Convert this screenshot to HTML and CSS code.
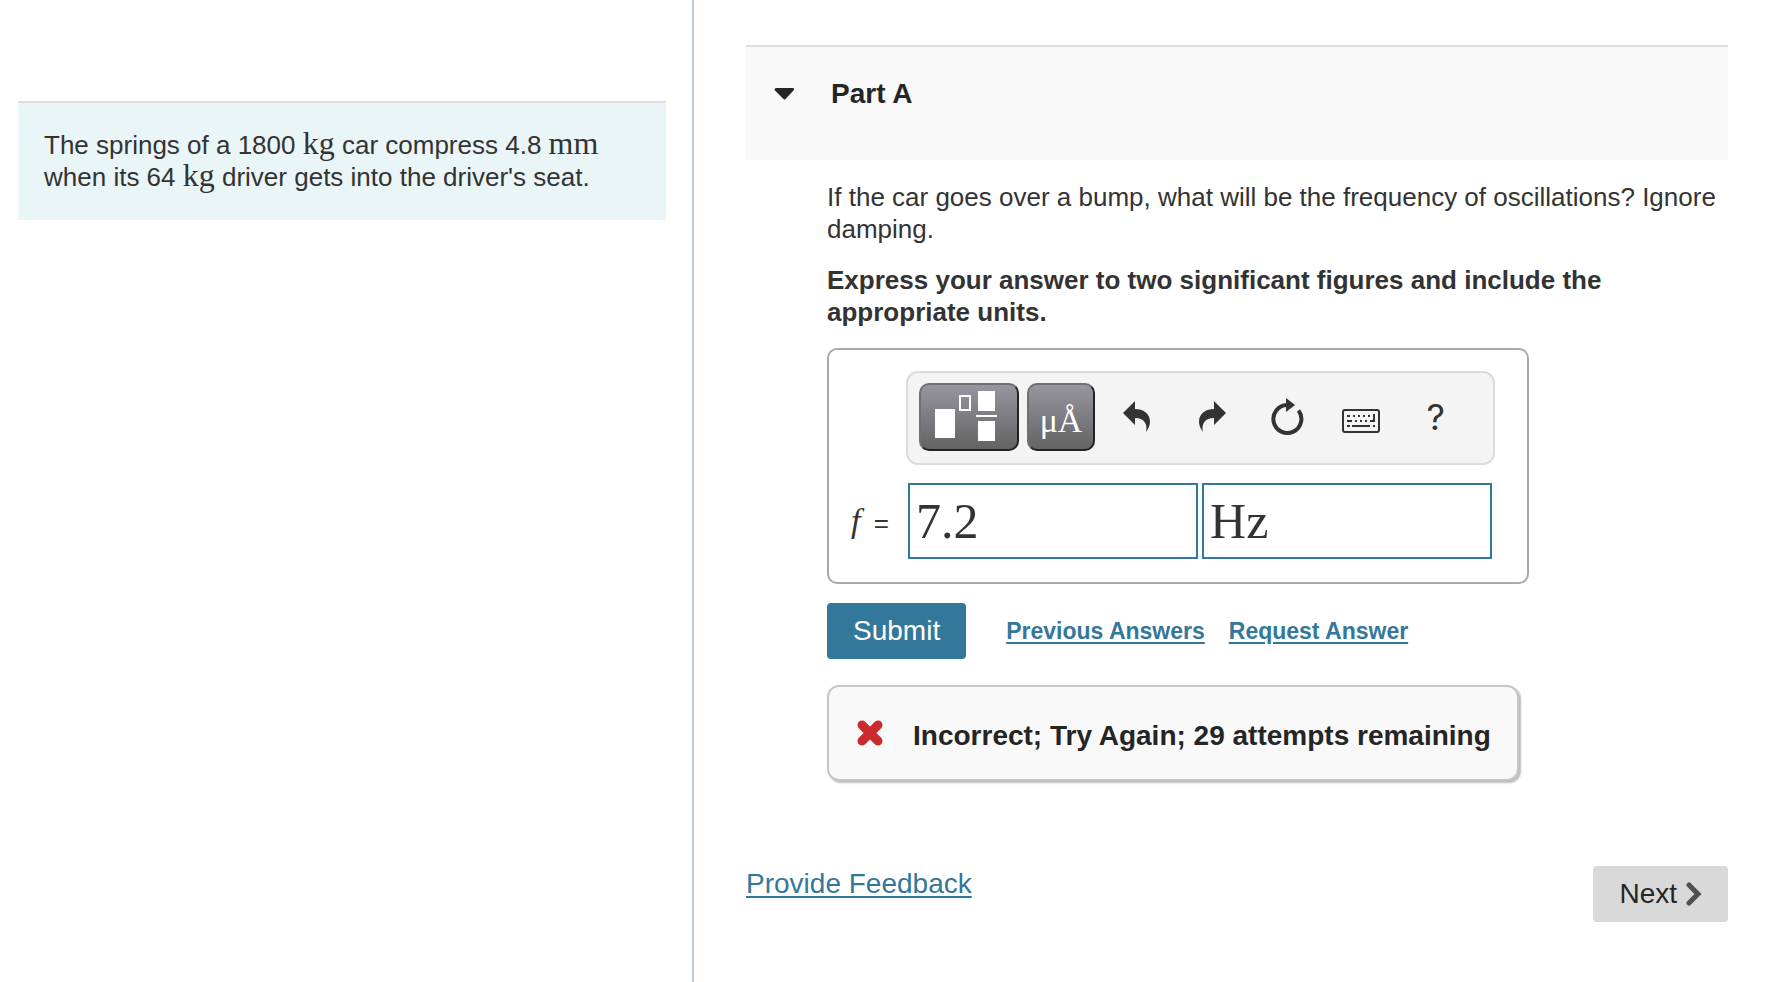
FILE: index.html
```html
<!DOCTYPE html>
<html lang="en">
<head>
  <meta charset="utf-8">
  <meta name="viewport" content="width=device-width, initial-scale=1.0">
  <title>Part A</title>
  <link rel="stylesheet" href="styles.css">
</head>
<body>
  <aside class="sidebar">
    <div class="problem">
      The springs of a 1800 <span class="unit">kg</span> car compress 4.8 <span class="unit">mm</span> when its 64 <span class="unit">kg</span> driver gets into the driver's seat.
    </div>
  </aside>

  <main class="content">
    <h2 class="part-header">
      <button class="part-toggle" type="button" aria-expanded="true">
        <svg class="caret" viewBox="0 0 22 12" width="22" height="12"><path d="M2 0H19Q21 1 19.500 2.500L11.500 11Q10.500 12 9.500 11L1 2.500Q-.5 1 2 0Z"/></svg>
        Part A
      </button>
    </h2>

    <div class="part-body">
      <p>If the car goes over a bump, what will be the frequency of oscillations? Ignore damping.</p>
      <p class="instructions">Express your answer to two significant figures and include the appropriate units.</p>

      <form class="answer">
        <div class="answer-box">
          <div class="toolbar">
            <button class="palette templates" type="button" aria-label="Templates">
              <svg viewBox="0 0 70 52" width="70" height="52">
                <g fill="#fff">
                  <path d="M1 18h20v29H1zM44 0h17v20H44zM42 24h21v2H42zM44 30h17v20H44z"/>
                </g>
                <rect x="26" y="5" width="10" height="14" fill="none" stroke="#fff" stroke-width="2"/>
              </svg>
            </button>
            <button class="palette symbols" type="button" aria-label="Symbols">μÅ</button>
            <button class="tool" type="button" aria-label="Undo">
              <svg viewBox="0 0 28 32" width="28" height="32"><path d="M0 12L12 0V8C20 8 27 12 27 21C27 25 25 28 23 31C25 23 21 17 12 17V24Z"/></svg>
            </button>
            <button class="tool" type="button" aria-label="Redo">
              <svg viewBox="0 0 28 32" width="28" height="32"><path d="M28 12L16 0V8C8 8 1 12 1 21C1 25 3 28 5 31C3 23 7 17 16 17V24Z"/></svg>
            </button>
            <button class="tool" type="button" aria-label="Reset">
              <svg viewBox="0 0 34 38" width="34" height="38"><path d="M17 7A14 14 0 1 0 28.500 12.500" fill="none" stroke="#333" stroke-width="4"/><path d="M16 0L25 7L16 14Z"/></svg>
            </button>
            <button class="tool" type="button" aria-label="Keyboard shortcuts">
              <svg class="keyboard" viewBox="0 0 38 24" width="38" height="24">
                <rect x="1" y="1" width="36" height="22" rx="2" fill="none" stroke="#333" stroke-width="2"/>
                <path d="M5 6h3v2H5zM11 6h2v2h-2zM16 6h2v2h-2zM21 6h2v2h-2zM26 6h2v2h-2zM5 11h5v2H5zM13 11h2v2h-2zM18 11h2v2h-2zM23 11h2v2h-2zM31 5h2v8h-5v-2h3zM5 16h3v2H5zM10 16h18v2H10zM31 16h2v2h-2z"/>
              </svg>
            </button>
            <button class="tool help" type="button" aria-label="Help">?</button>
          </div>
          <div class="fields">
            <label for="value"><i class="variable">f</i> =</label>
            <input id="value" type="text" value="7.2">
            <input id="units" type="text" value="Hz" aria-label="Units">
          </div>
        </div>

        <div class="actions">
          <button class="submit" type="submit">Submit</button>
          <a href="#">Previous Answers</a>
          <a href="#">Request Answer</a>
        </div>
      </form>

      <div class="feedback" role="status">
        <svg viewBox="0 0 28 28" width="28" height="28"><path d="M6 6L22 22M22 6L6 22" fill="none" stroke="#cb2a2d" stroke-width="9" stroke-linecap="round"/></svg>
        <span class="feedback-text">Incorrect; Try Again; 29 attempts remaining</span>
      </div>
    </div>

    <footer class="footer">
      <a href="#">Provide Feedback</a>
      <button class="next" type="button">
        Next
        <svg viewBox="0 0 16 24" width="16" height="24"><path d="M3 3L12 12L3 21" fill="none" stroke="#505050" stroke-width="5" stroke-linecap="round"/></svg>
      </button>
    </footer>
  </main>
</body>
</html>
```

FILE: styles.css
```css
* {
  box-sizing: border-box;
}

body {
  display: flex;
  min-height: 100vh;
  margin: 0;
  background-color: #fff;
  color: #333;
  font-family: "Liberation Sans", Arial, sans-serif;
  font-size: 26px;
  line-height: 32px;
}

button {
  padding: 0;
  border: none;
  background: none;
  color: inherit;
  font: inherit;
  cursor: pointer;
}

a {
  color: #33789a;
  text-decoration-thickness: 2px;
  text-underline-offset: 3px;
}

svg {
  display: block;
  flex: none;
  fill: #333;
}

/* problem statement */
.sidebar {
  flex: none;
  width: 39.3%;
  padding: 101px 26px 0 18px;
  border-right: 2px solid #bfcbdc;
}

.problem {
  padding: 26px;
  padding-bottom: 27px;
  border-top: 2px solid #dcdee1;
  background-color: #eaf5f8;
}

.unit {
  font-family: "Liberation Serif", "Times New Roman", serif;
  font-size: 32px;
  line-height: 0;
}

/* question */
.content {
  flex: 1;
  padding: 45px 38px 60px 52px;
}

.part-header {
  height: 115px;
  margin: 0;
  padding: 31px 28px;
  border-top: 2px solid #dddfdf;
  background-color: #f9f9f9;
  font-size: 28px;
}

.part-toggle {
  display: flex;
  align-items: center;
  gap: 35px;
  color: #252525;
}

.caret {
  fill: #252525;
}

.part-body {
  padding: 21px 0 0 81px;
}

p {
  margin: 0 0 19px;
}

.instructions {
  margin-bottom: 20px;
  font-weight: bold;
}

.answer-box {
  max-width: 702px;
  padding: 21px 32px 23px 22px;
  border: 2px solid #a9a9a9;
  border-radius: 10px;
}

.toolbar {
  display: flex;
  align-items: center;
  height: 94px;
  margin-left: 55px;
  padding: 0 20px 2px 11px;
  border: 2px solid #dcdcdc;
  border-radius: 12px;
  background-color: #f4f4f4;
}

.palette {
  display: flex;
  align-items: center;
  justify-content: center;
  height: 68px;
  margin-right: 8px;
  border: 2px solid #222;
  border-top-color: #707070;
  border-left-color: #707070;
  border-radius: 10px;
  background: linear-gradient(#9795a0, #636363);
  color: #fff;
}

.templates {
  width: 100px;
}

.symbols {
  width: 68px;
  margin-right: 5px;
  padding-top: 8px;
  font-family: "Liberation Serif", "Times New Roman", serif;
  font-size: 34px;
}

.tool {
  display: flex;
  flex: 1;
  align-items: center;
  justify-content: center;
  height: 68px;
}

.keyboard {
  margin-top: 8px;
}

.help {
  font-family: Inter, sans-serif;
  font-size: 36px;
}

.fields {
  display: flex;
  align-items: center;
  gap: 4px;
  margin-top: 18px;
  margin-right: 3px;
}

.fields label {
  flex: none;
  width: 53px;
}

.variable {
  margin-right: 6px;
  font-family: "Liberation Serif", "Times New Roman", serif;
  font-size: 34px;
  line-height: 1;
}

.fields input {
  flex: 1;
  min-width: 0;
  height: 76px;
  padding: 0 6px;
  border: 2px solid #33789a;
  background-color: #fff;
  color: #333;
  font-family: "Liberation Serif", "Times New Roman", serif;
  font-size: 50px;
}

.actions {
  display: flex;
  align-items: center;
  gap: 24px;
  margin: 19px 0 26px;
  font-size: 23px;
  font-weight: bold;
}

.submit {
  height: 56px;
  margin-right: 16px;
  padding: 0 26px;
  border-radius: 4px;
  background-color: #33789a;
  color: #fff;
  font-size: 28px;
  font-weight: normal;
}

.feedback {
  display: flex;
  align-items: center;
  gap: 29px;
  width: fit-content;
  height: 96px;
  padding: 0 26px 0 27px;
  border: 2px solid #c6c6c6;
  border-radius: 12px;
  background-color: #f9f9f9;
  box-shadow: 2px 2px 2px #bbb;
  color: #252525;
  font-size: 28px;
  font-weight: bold;
}

.feedback-text {
  padding-top: 6px;
}

.footer {
  display: flex;
  align-items: flex-start;
  justify-content: space-between;
  margin-top: 85px;
  font-size: 28px;
}

.footer a {
  padding-top: 2px;
}

.next {
  display: flex;
  align-items: center;
  gap: 9px;
  height: 56px;
  padding: 0 26px;
  border-radius: 4px;
  background-color: #d9d9d9;
  color: #252525;
}
```
